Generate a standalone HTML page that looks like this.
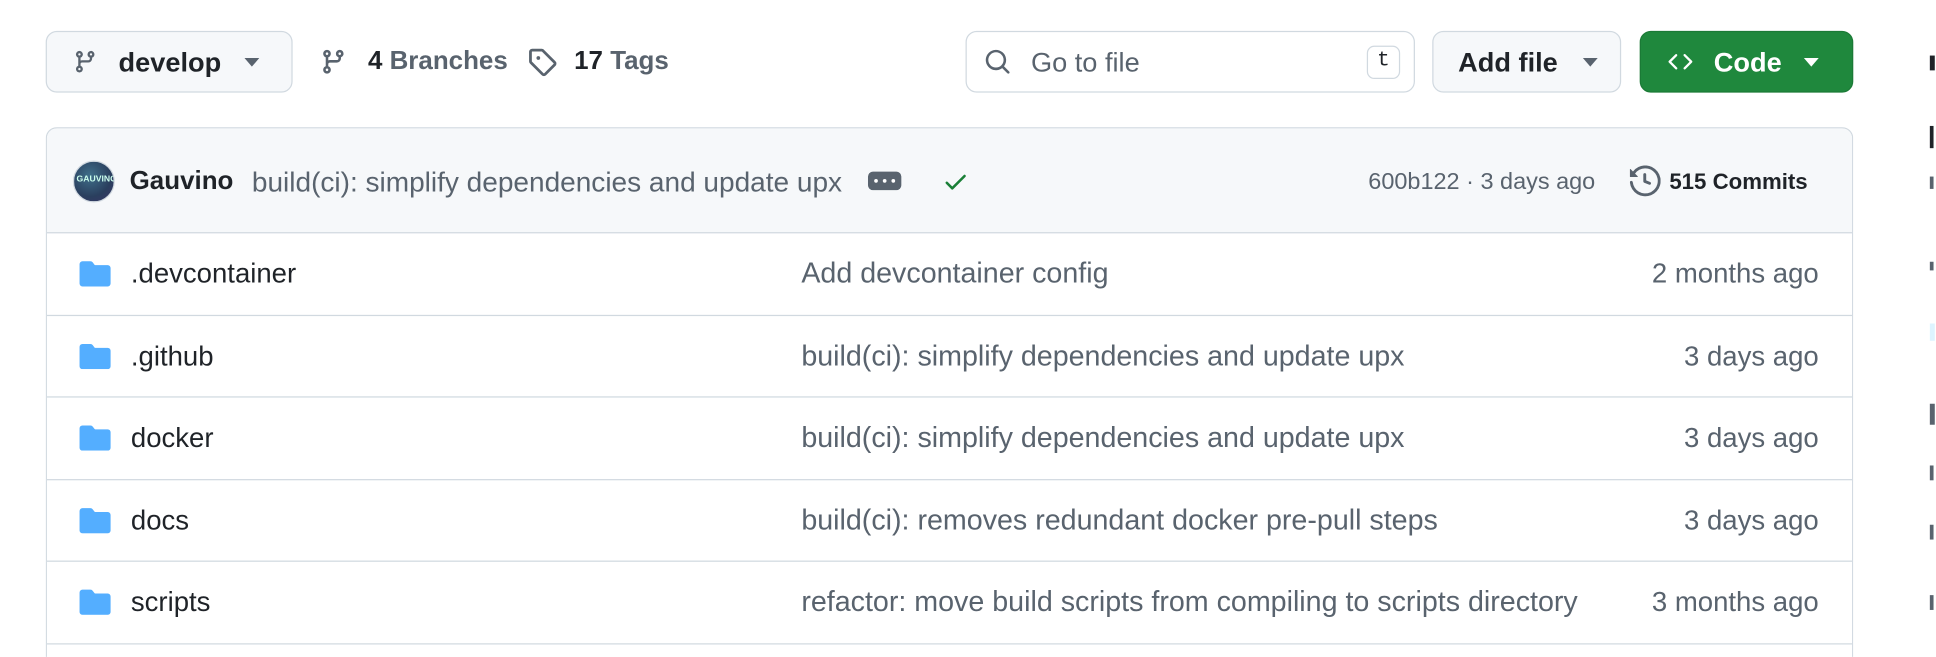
<!DOCTYPE html>
<html><head><meta charset="utf-8"><style>
*{box-sizing:border-box;margin:0;padding:0}
html,body{width:1936px;height:657px;overflow:hidden;background:#fff}
body{font-family:"Liberation Sans",sans-serif;color:#1f2328;position:relative}
#w{position:absolute;left:0;top:0;width:1568px;height:532px;overflow:hidden;transform:scale(1.2347);transform-origin:0 0}
.abs{position:absolute}
.btn{position:absolute;top:25px;height:50px;border:1.5px solid #d1d9e0;border-radius:9px;background:#f6f8fa;display:flex;align-items:center}
.b{font-weight:bold}
.caret{width:0;height:0;border-left:6px solid transparent;border-right:6px solid transparent;border-top:7px solid #59636e;position:absolute}
.box{position:absolute;left:37px;top:103px;width:1464px;height:440px;border:1.5px solid #d1d9e0;border-bottom:none;border-radius:9px 9px 0 0;overflow:hidden}
.hdr{height:85px;background:#f6f8fa;border-bottom:1.5px solid #d1d9e0;position:relative}
.row{height:66.5px;border-bottom:1.5px solid #d1d9e0;position:relative;font-size:22.3px}
.row .n{position:absolute;left:68px;top:20px;color:#1f2328}
.row .m{position:absolute;left:611px;top:19px;color:#59636e;font-size:23.2px}
.row .d{position:absolute;right:27px;top:20px;color:#59636e}
.row svg{position:absolute;left:26px;top:21px}
</style></head><body><div id="w">

<div class="btn" style="left:37px;width:200px">
<svg class="abs" style="left:21px;top:13px" width="20" height="22" viewBox="0 0 16 16" fill="#59636e"><path d="M9.5 3.25a2.25 2.25 0 1 1 3 2.122V6A2.5 2.5 0 0 1 10 8.5H6a1 1 0 0 0-1 1v1.128a2.251 2.251 0 1 1-1.5 0V5.372a2.25 2.25 0 1 1 1.5 0v1.836A2.493 2.493 0 0 1 6 7h4a1 1 0 0 0 1-1v-.628A2.25 2.25 0 0 1 9.5 3.25Zm-6 0a.75.75 0 1 0 1.5 0 .75.75 0 0 0-1.5 0Zm8.25-.75a.75.75 0 1 0 0 1.5.75.75 0 0 0 0-1.5ZM4.250 12a.75.75 0 1 0 0 1.5.75.75 0 0 0 0-1.5Z"/></svg>
<span class="abs b" style="left:58px;top:12px;font-size:22px">develop</span>
<div class="caret" style="left:160px;top:21px"></div>
</div>

<svg class="abs" style="left:259px;top:38px" width="22" height="24" viewBox="0 0 16 16" fill="#59636e"><path d="M9.5 3.25a2.25 2.25 0 1 1 3 2.122V6A2.5 2.5 0 0 1 10 8.5H6a1 1 0 0 0-1 1v1.128a2.251 2.251 0 1 1-1.5 0V5.372a2.25 2.25 0 1 1 1.5 0v1.836A2.493 2.493 0 0 1 6 7h4a1 1 0 0 0 1-1v-.628A2.25 2.25 0 0 1 9.5 3.25Zm-6 0a.75.75 0 1 0 1.5 0 .75.75 0 0 0-1.5 0Zm8.25-.75a.75.75 0 1 0 0 1.5.75.75 0 0 0 0-1.5ZM4.25 12a.75.75 0 1 0 0 1.5.75.75 0 0 0 0-1.5Z"/></svg>
<span class="abs" style="left:298px;top:38px;font-size:21px"><b>4</b> <b style="color:#59636e">Branches</b></span>
<svg class="abs" style="left:427px;top:38px" width="24" height="24" viewBox="0 0 16 16" fill="#59636e"><path d="M1 7.775V2.75C1 1.784 1.784 1 2.75 1h5.025c.464 0 .91.184 1.238.513l6.25 6.25a1.75 1.75 0 0 1 0 2.474l-5.026 5.026a1.75 1.75 0 0 1-2.474 0l-6.25-6.25A1.752 1.752 0 0 1 1 7.775Zm1.5 0c0 .066.026.13.073.177l6.25 6.25a.25.25 0 0 0 .354 0l5.025-5.025a.25.25 0 0 0 0-.354l-6.25-6.25a.25.25 0 0 0-.177-.073H2.75a.25.25 0 0 0-.25.25ZM6 5a1 1 0 1 1 0 2 1 1 0 0 1 0-2Z"/></svg>
<span class="abs" style="left:465px;top:38px;font-size:21px"><b>17</b> <b style="color:#59636e">Tags</b></span>

<div class="btn" style="left:782px;width:364px;background:#fff">
<svg class="abs" style="left:14px;top:13px" width="22" height="22" viewBox="0 0 16 16" fill="#59636e"><path d="M10.68 11.74a6 6 0 0 1-7.922-8.982 6 6 0 0 1 8.982 7.922l3.04 3.04a.749.749 0 0 1-.326 1.275.749.749 0 0 1-.734-.215ZM11.5 7a4.499 4.499 0 1 0-8.997 0A4.499 4.499 0 0 0 11.5 7Z"/></svg>
<span class="abs" style="left:52px;top:12px;font-size:22px;color:#59636e">Go to file</span>
<span class="abs" style="left:324px;top:11px;width:27px;height:27px;border:1.5px solid #d1d9e0;border-radius:6px;font-family:'Liberation Mono',monospace;font-size:17px;text-align:center;line-height:23px;color:#1f2328">t</span>
</div>

<div class="btn" style="left:1160px;width:153px">
<span class="abs b" style="left:20px;top:12px;font-size:22px">Add file</span>
<div class="caret" style="left:121px;top:21px"></div>
</div>

<div class="btn" style="left:1328px;width:173px;background:#1f883d;border-color:#1b7a36">
<svg class="abs" style="left:19px;top:14px" width="26" height="20" viewBox="0 0 16 16" fill="#fff"><path d="m11.28 3.22 4.25 4.250a.75.75 0 0 1 0 1.06l-4.25 4.25a.749.749 0 0 1-1.275-.326.749.749 0 0 1 .215-.734L13.94 8l-3.72-3.72a.749.749 0 0 1 .326-1.275.749.749 0 0 1 .734.215Zm-6.56 0a.751.751 0 0 1 1.042.018.751.751 0 0 1 .018 1.042L2.06 8l3.72 3.72a.749.749 0 0 1-.326 1.275.749.749 0 0 1-.734-.215L.47 8.53a.75.75 0 0 1 0-1.06Z"/></svg>
<span class="abs b" style="left:59px;top:12px;font-size:22px;color:#fff">Code</span>
<div class="caret" style="left:132px;top:21px;border-top-color:#fff"></div>
</div>

<div class="box">
<div class="hdr">
<div class="abs" style="left:21px;top:26px;width:34px;height:34px;border-radius:50%;background:radial-gradient(circle at 40% 35%,#3f6f8a,#2a3f5e 60%,#3a3566);border:1.5px solid #d1d9e0;overflow:hidden"><span style="position:absolute;left:2px;top:11px;font-size:7px;color:#cfe;font-weight:bold">GAUVINO</span></div>
<span class="abs b" style="left:67px;top:31px;font-size:21px">Gauvino</span>
<span class="abs" style="left:166px;top:30px;font-size:22.7px;color:#59636e">build(ci): simplify dependencies and update upx</span>
<div class="abs" style="left:665px;top:35px;width:27px;height:15px;background:#59636e;border-radius:4px"><span style="position:absolute;left:5px;top:6px;width:3px;height:3px;background:#fff;border-radius:50%;box-shadow:7px 0 #fff,14px 0 #fff"></span></div>
<svg class="abs" style="left:725px;top:32px" width="22" height="22" viewBox="0 0 16 16" fill="#1a7f37"><path d="M13.78 4.22a.75.75 0 0 1 0 1.06l-7.25 7.25a.75.75 0 0 1-1.06 0L2.22 9.28a.751.751 0 0 1 .018-1.042.751.751 0 0 1 1.042-.018L6 10.94l6.72-6.72a.75.75 0 0 1 1.06 0Z"/></svg>
<span class="abs" style="right:208px;top:33px;font-size:19px;color:#59636e">600b122 · 3 days ago</span>
<svg class="abs" style="left:1282px;top:30px" width="25" height="25" viewBox="0 0 16 16" fill="#59636e"><path d="m.427 1.927 1.215 1.215a8.002 8.002 0 1 1-1.6 5.685.75.75 0 1 1 1.493-.154 6.5 6.5 0 1 0 1.18-4.458l1.358 1.358A.25.25 0 0 1 3.896 6H.25A.25.25 0 0 1 0 5.75V2.104a.25.25 0 0 1 .427-.177ZM7.75 4a.75.75 0 0 1 .75.75v2.992l2.028.812a.75.75 0 0 1-.557 1.392l-2.5-1A.751.751 0 0 1 7 8.25v-3.5A.75.75 0 0 1 7.75 4Z"/></svg>
<span class="abs b" style="left:1314px;top:33px;font-size:18px">515 Commits</span>
</div>
<div class="row"><svg width="26" height="22" viewBox="0 0 16 14" fill="#54aeff"><path d="M0 2.5A1.5 1.5 0 0 1 1.5 1h4.1a1.5 1.5 0 0 1 1.2.6l.9 1.2a.5.5 0 0 0 .4.2h6.4A1.5 1.5 0 0 1 16 4.5v8a1.5 1.5 0 0 1-1.5 1.5h-13A1.5 1.5 0 0 1 0 12.5Z"/></svg><span class="n">.devcontainer</span><span class="m">Add devcontainer config</span><span class="d">2 months ago</span></div>
<div class="row"><svg width="26" height="22" viewBox="0 0 16 14" fill="#54aeff"><path d="M0 2.5A1.5 1.5 0 0 1 1.5 1h4.1a1.5 1.5 0 0 1 1.2.6l.9 1.2a.5.5 0 0 0 .4.2h6.4A1.5 1.5 0 0 1 16 4.5v8a1.5 1.5 0 0 1-1.5 1.5h-13A1.5 1.5 0 0 1 0 12.5Z"/></svg><span class="n">.github</span><span class="m">build(ci): simplify dependencies and update upx</span><span class="d">3 days ago</span></div>
<div class="row"><svg width="26" height="22" viewBox="0 0 16 14" fill="#54aeff"><path d="M0 2.5A1.5 1.5 0 0 1 1.5 1h4.1a1.5 1.5 0 0 1 1.2.6l.9 1.2a.5.5 0 0 0 .4.2h6.4A1.5 1.5 0 0 1 16 4.5v8a1.5 1.5 0 0 1-1.5 1.5h-13A1.5 1.5 0 0 1 0 12.5Z"/></svg><span class="n">docker</span><span class="m">build(ci): simplify dependencies and update upx</span><span class="d">3 days ago</span></div>
<div class="row"><svg width="26" height="22" viewBox="0 0 16 14" fill="#54aeff"><path d="M0 2.5A1.5 1.5 0 0 1 1.5 1h4.1a1.5 1.5 0 0 1 1.2.6l.9 1.2a.5.5 0 0 0 .4.2h6.4A1.5 1.5 0 0 1 16 4.5v8a1.5 1.5 0 0 1-1.5 1.5h-13A1.5 1.5 0 0 1 0 12.5Z"/></svg><span class="n">docs</span><span class="m">build(ci): removes redundant docker pre-pull steps</span><span class="d">3 days ago</span></div>
<div class="row"><svg width="26" height="22" viewBox="0 0 16 14" fill="#54aeff"><path d="M0 2.5A1.5 1.5 0 0 1 1.5 1h4.1a1.5 1.5 0 0 1 1.2.6l.9 1.2a.5.5 0 0 0 .4.2h6.4A1.5 1.5 0 0 1 16 4.5v8a1.5 1.5 0 0 1-1.5 1.5h-13A1.5 1.5 0 0 1 0 12.5Z"/></svg><span class="n">scripts</span><span class="m">refactor: move build scripts from compiling to scripts directory</span><span class="d">3 months ago</span></div>
</div>

<div class="abs" style="left:1563px;top:45px;width:4px;height:12px;background:#1f2328"></div>
<div class="abs" style="left:1563px;top:102px;width:3px;height:18px;background:#1f2328"></div>
<div class="abs" style="left:1563px;top:143px;width:3px;height:10px;background:#59636e"></div>
<div class="abs" style="left:1563px;top:212px;width:3px;height:7px;background:#59636e"></div>
<div class="abs" style="left:1563px;top:262px;width:4px;height:14px;background:#ddf4ff"></div>
<div class="abs" style="left:1563px;top:327px;width:4px;height:17px;background:#59636e"></div>
<div class="abs" style="left:1563px;top:377px;width:3px;height:12px;background:#59636e"></div>
<div class="abs" style="left:1563px;top:425px;width:3px;height:12px;background:#59636e"></div>
<div class="abs" style="left:1563px;top:482px;width:3px;height:12px;background:#59636e"></div>
</div></body></html>
